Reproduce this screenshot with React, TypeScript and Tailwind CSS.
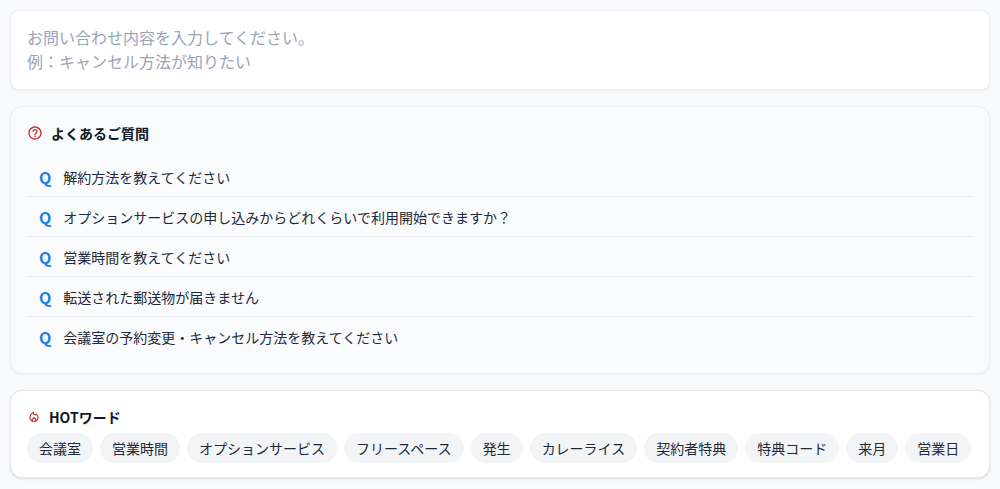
import { useState } from "react";
import { MdHelpOutline, MdOutlineLocalFireDepartment } from "react-icons/md";

const faqs = [
  "解約方法を教えてください",
  "オプションサービスの申し込みからどれくらいで利用開始できますか？",
  "営業時間を教えてください",
  "転送された郵送物が届きません",
  "会議室の予約変更・キャンセル方法を教えてください",
];

const hotWords = [
  "会議室",
  "営業時間",
  "オプションサービス",
  "フリースペース",
  "発生",
  "カレーライス",
  "契約者特典",
  "特典コード",
  "来月",
  "営業日",
];

function FaqCard({ onSelect }: { onSelect: (text: string) => void }) {
  return (
    <section className="rounded-xl border border-[#eceef1] bg-[#fafbfd] p-4 shadow-xs">
      <h2 className="flex items-center gap-2 text-sm leading-5 font-bold text-gray-900">
        <MdHelpOutline size={16} className="text-[#c53030]" aria-hidden />
        よくあるご質問
      </h2>
      <ul className="mt-3.5">
        {faqs.map((q) => (
          <li key={q} className="flex h-10 border-b border-[#eaecef] last:border-b-0">
            <button
              type="button"
              onClick={() => onSelect(q)}
              className="flex w-full items-center gap-3 px-3 text-left text-sm text-gray-800"
            >
              <span className="text-base font-bold text-[#1a7fe8]">Q</span>
              {q}
            </button>
          </li>
        ))}
      </ul>
    </section>
  );
}

function HotWordCard({ onSelect }: { onSelect: (text: string) => void }) {
  return (
    <section className="rounded-xl border border-gray-200 bg-white px-4 pt-4 pb-3.5 shadow-sm">
      <h2 className="flex items-center gap-2 text-sm leading-5 font-bold text-gray-900">
        <MdOutlineLocalFireDepartment size={14} className="text-[#c53030]" aria-hidden />
        HOTワード
      </h2>
      <div className="mt-1.5 flex flex-wrap gap-[7px]">
        {hotWords.map((word) => (
          <button
            key={word}
            type="button"
            onClick={() => onSelect(word)}
            className="rounded-full bg-gray-100 px-3 py-[5px] text-sm leading-5 text-gray-800"
          >
            {word}
          </button>
        ))}
      </div>
    </section>
  );
}

export default function App() {
  const [query, setQuery] = useState("");

  return (
    <main className="flex min-h-screen flex-col gap-4 bg-[#f9fafc] p-2.5 font-['Noto_Sans_CJK_JP',sans-serif]">
      <textarea
        aria-label="お問い合わせ内容"
        rows={2}
        value={query}
        onChange={(e) => setQuery(e.target.value)}
        placeholder={"お問い合わせ内容を入力してください。\n例：キャンセル方法が知りたい"}
        className="block h-20 w-full resize-none rounded-lg border border-[#eceef1] bg-white px-4 py-3.5 text-base leading-6 text-gray-800 shadow-xs outline-none placeholder:text-[#9ca3b8]"
      />
      <FaqCard onSelect={setQuery} />
      <HotWordCard onSelect={setQuery} />
    </main>
  );
}
